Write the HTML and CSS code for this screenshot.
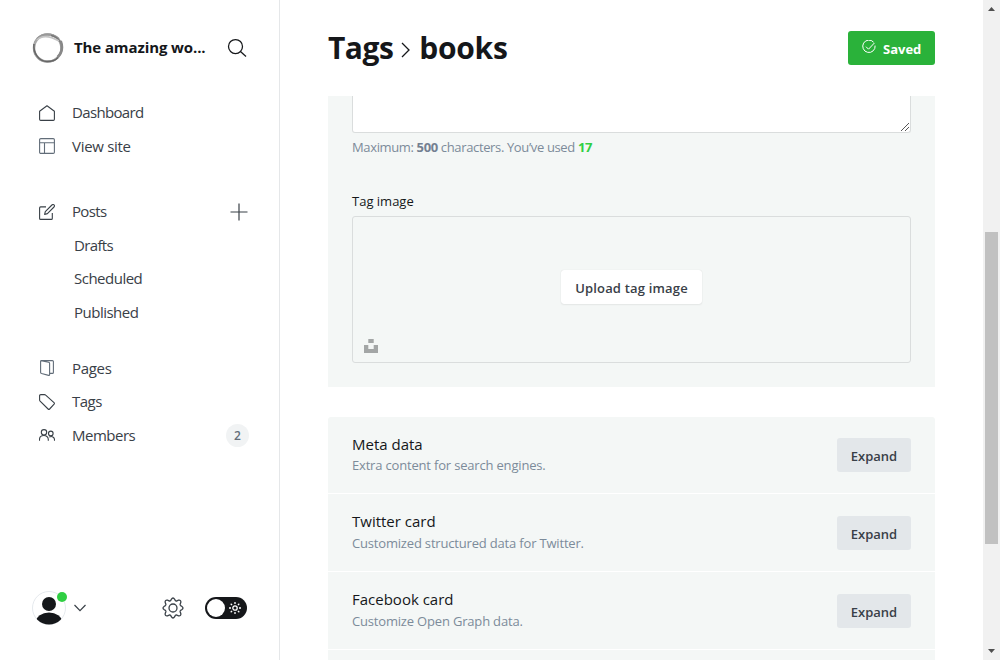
FILE: index.html
```html
<!DOCTYPE html>
<html lang="en">
<head>
<meta charset="utf-8">
<title>Tags</title>
<link rel="stylesheet" href="styles.css">
</head>
<body>
<div class="app">
  <aside class="sidebar">
    <header class="site">
      <svg class="site-logo" width="32" height="32" viewBox="0 0 32 32" fill="none">
        <circle cx="15.500" cy="16" r="13.700" stroke="#999" stroke-width="2"/>
        <ellipse cx="16" cy="16" rx="13.800" ry="13.400" stroke="#aaa" stroke-width="2.200"/>
        <path d="M5 7C10 1.500 20 .8 27 7" stroke="#999" stroke-width="2"/>
        <path d="M2 12C.8 21 7 29.500 15 29.500c5 0 9-1.500 11-4" stroke="#666" stroke-width="1.500"/>
        <path d="M28.700 9c2.300 6 1 12-3 16" stroke="#888" stroke-width="2.600"/>
        <path d="M19 3.500c4 .8 7 3 9 6" stroke="#777" stroke-width="1.500"/>
        <path d="M5 8C10 3 18 4 27 9" stroke="#c4c4c4" stroke-width="1.500"/>
      </svg>
      <span class="site-name">The amazing wo...</span>
      <svg class="search" width="20" height="20" viewBox="0 0 20 20" fill="none" stroke="#15171a" stroke-width="1.250"><circle cx="8.500" cy="8.500" r="7"/><path d="M13.500 13.500l5.500 5"/></svg>
    </header>

    <nav class="nav">
      <div class="group">
        <a class="item"><svg class="icon" viewBox="0 0 16 16"><path d="M.6 6.200v8.100c0 .7.4 1.100 1.100 1.100h12.600c.7 0 1.100-.4 1.100-1.100V6.200L8 .7z"/></svg><span class="tight">Dashboard</span></a>
        <a class="item"><svg class="icon muted" viewBox="0 0 16 16"><rect x=".6" y=".6" width="14.800" height="14.800" rx="1.200"/><path d="M.6 4.800h14.800M5.500 4.800v10.600"/></svg><span class="loose">View site</span></a>
      </div>
      <div class="group posts">
        <a class="item"><svg class="icon" viewBox="0 0 16 16"><path d="M7 2.900H1.600c-.6 0-1 .4-1 1v10.500c0 .6.400 1 1 1h10.700c.6 0 1-.4 1-1V9"/><path d="M5.600 10.400l.7-2.800L12.900 1c1.500-1.300 3.400.5 2.100 2L8.400 9.600z"/></svg><span class="tight">Posts</span><svg class="plus" width="18" height="18" viewBox="0 0 18 18"><path d="M9 .5v17M.5 9h17"/></svg></a>
        <a class="item sub"><span class="tight">Drafts</span></a>
        <a class="item sub"><span>Scheduled</span></a>
        <a class="item sub"><span>Published</span></a>
      </div>
      <div class="group">
        <a class="item"><svg class="icon muted" viewBox="0 0 16 16"><path d="M2 .7l7.600 1.500c.7.200 1 .5 1 1.100v11.200c0 .7-.4 1-1 .900l-7-1.900c-.6-.2-1-.5-1-1.100V1.300c0-.5.3-.7.800-.7h11c.6 0 1 .4 1 1v10.800c0 .6-.4 1-1 1h-2.600"/></svg><span class="loose">Pages</span></a>
        <a class="item"><svg class="icon" viewBox="0 0 16 16"><path d="M.6 1.800C.6 1 1 .6 1.800.6h3.700c.5 0 .8.100 1.200.5l8.300 7.600c.5.500.5 1 .1 1.500l-4.500 4.800c-.5.500-1 .5-1.500 0L1.100 7.200c-.4-.4-.5-.7-.5-1.200z"/></svg><span>Tags</span></a>
        <a class="item"><svg class="icon" viewBox="0 0 16 16"><circle cx="5" cy="5.300" r="2.700"/><path d="M.5 13.700v-1.200c0-5.300 8.800-5.300 8.800 0v1.200"/><circle cx="11.800" cy="6.400" r="2.300"/><path d="M10.300 9.900c2.700-1.200 5.200.3 5.200 2.700v1.100"/></svg><span>Members</span><b class="count">2</b></a>
      </div>
    </nav>

    <footer class="foot">
      <div class="avatar">
        <svg width="34" height="34" viewBox="0 0 34 34"><defs><clipPath id="round"><circle cx="17" cy="17" r="16.500"/></clipPath></defs><circle cx="17" cy="17" r="16.500" fill="#fff" stroke="#e5e9ed"/><g clip-path="url(#round)" fill="#15171a"><circle cx="17" cy="13" r="7"/><ellipse cx="17" cy="31" rx="13" ry="9.500"/></g></svg>
        <i class="online"></i>
      </div>
      <svg class="chevron" width="12" height="8" viewBox="0 0 12 8"><path d="M.5 1L6 6.700 11.500 1"/></svg>
      <svg class="gear" width="22" height="22" viewBox="0 0 22 22"><circle cx="11" cy="11" r="4"/><path d="M9.300 2.300Q11-.3 12.700 2.300L13.300 3.600Q14 4.300 15 3.800L16.400 3.200Q19.300 2.800 18.800 5.600L18.200 7Q17.800 8 18.600 8.600L19.700 9.200Q22.300 11 19.700 12.800L18.600 13.400Q17.800 14 18.200 15L18.800 16.400Q19.300 19.200 16.400 18.800L15 18.200Q14 17.700 13.300 18.400L12.700 19.700Q11 22.300 9.300 19.700L8.700 18.400Q8 17.700 7 18.200L5.600 18.800Q2.700 19.200 3.200 16.400L3.800 15Q4.200 14 3.400 13.400L2.300 12.800Q-.3 11 2.300 9.200L3.400 8.600Q4.200 8 3.800 7L3.200 5.600Q2.700 2.800 5.600 3.200L7 3.800Q8 4.300 8.700 3.600Z"/></svg>
      <div class="toggle"><i class="knob"></i><svg width="12" height="12" viewBox="0 0 12 12" fill="none" stroke="#fff" stroke-width="1.300"><circle cx="6" cy="6" r="2.200"/><path d="M6 0v2M6 10v2M0 6h2M10 6h2M1.700 1.700l1.400 1.400M8.900 8.900l1.400 1.400M1.700 10.300l1.400-1.400M8.900 3.100l1.400-1.400"/></svg></div>
    </footer>
  </aside>

  <main class="main">
    <header class="head">
      <h1 class="title"><span class="parent">Tags</span><svg width="9" height="16" viewBox="0 0 9 16"><path d="M1 1l7 7-7 7"/></svg><span class="current">books</span></h1>
      <button class="saved"><svg width="14" height="14" viewBox="0 0 14 14"><path d="M11.600 2.200A6.200 6.200 0 1 0 13.100 5.600"/><path d="M4 6.700l2.500 2.500 6-6.300"/></svg><span>Saved</span></button>
    </header>
    <section class="panel">
      <div class="textarea"><svg width="8" height="8" viewBox="0 0 8 8"><path d="M0 8L8 0M4 8l4-4"/></svg></div>
      <p class="hint">Maximum: <b>500</b> characters. You’ve used <b class="used">17</b></p>
      <div class="label">Tag image</div>
      <div class="upload">
        <button class="upload-btn">Upload tag image</button>
        <svg class="unsplash" width="14" height="14" viewBox="0 0 14 14"><path d="M4.300 0h5.400v4H4.300zM0 6h4.300v4h5.400V6H14v8H0z"/></svg>
      </div>
    </section>
    <section class="cards">
      <div class="card"><div><h4>Meta data</h4><p>Extra content for search engines.</p></div><button class="expand">Expand</button></div>
      <div class="card"><div><h4>Twitter card</h4><p>Customized structured data for Twitter.</p></div><button class="expand">Expand</button></div>
      <div class="card"><div><h4>Facebook card</h4><p>Customize Open Graph data.</p></div><button class="expand">Expand</button></div>
      <div class="card"></div>
    </section>
  </main>

  <div class="scrollbar">
    <svg width="7" height="4" viewBox="0 0 7 4"><path d="M0 4L3.500 0 7 4z"/></svg>
    <i class="thumb"></i>
    <svg width="7" height="4" viewBox="0 0 7 4"><path d="M0 0L3.500 4 7 0z"/></svg>
  </div>
</div>
</body>
</html>
```
FILE: styles.css
```css
* { box-sizing: border-box; }
body { margin: 0; font-family: "Open Sans", "Noto Sans", sans-serif; color: #15171a; background: #fff; }
h1, h4, p { margin: 0; }
button { border: 0; font: inherit; padding: 0; }
svg { flex: none; display: block; }
.app { display: flex; width: 1000px; height: 660px; overflow: hidden; }

.sidebar { width: 280px; flex: none; border-right: 1px solid #e5e7e9; display: flex; flex-direction: column; }
.site { display: flex; align-items: center; height: 96px; padding-left: 32px; }
.site-name { width: 144px; margin-left: 10px; padding-bottom: 2px; font-size: 15px; font-weight: 700; white-space: nowrap; letter-spacing: -.1px; }
.search { margin-left: 9px; }
.nav { display: flex; flex-direction: column; gap: 22.300px; }
.group { display: flex; flex-direction: column; }
.posts { margin-top: 9.700px; }
.item { display: flex; align-items: center; height: 33.500px; padding: 0 31px 0 39px; font-size: 15px; line-height: 20px; color: #394047; white-space: nowrap; letter-spacing: -.5px; }
.item span { padding-bottom: 1px; }
.item .tight { letter-spacing: -.65px; }
.item .loose { letter-spacing: -.3px; }
.item.sub { padding-left: 74px; }
.icon { width: 16px; height: 16px; margin-right: 17px; fill: none; stroke: #394047; stroke-width: 1.100; stroke-linejoin: round; }
.icon.muted { stroke: #626d79; }
.plus { margin-left: auto; stroke: #394047; stroke-width: 1.200; }
.count { margin: 0 -1px 0 auto; width: 23px; height: 23px; border-radius: 12px; background: #f1f3f4; color: #626d79; font-size: 12px; font-weight: 600; line-height: 24px; text-align: center; letter-spacing: 0; }
.foot { margin-top: auto; display: flex; align-items: center; height: 104px; padding: 0 32px; }
.avatar { position: relative; width: 34px; height: 34px; }
.online { position: absolute; top: 1px; right: -1px; width: 10px; height: 10px; border-radius: 50%; background: #30cf43; }
.chevron { margin-left: 8px; fill: none; stroke: #394047; stroke-width: 1.200; }
.gear { margin-left: 76px; fill: none; stroke: #394047; stroke-width: 1.300; }
.toggle { margin-left: 21px; width: 42px; height: 22px; border-radius: 11px; background: #15171a; display: flex; flex: none; align-items: center; padding: 0 6px 0 2px; justify-content: space-between; }
.knob { width: 18px; height: 18px; border-radius: 50%; background: #fff; }

.main { width: 607px; margin-left: 48px; flex: none; }
.head { height: 96px; display: flex; align-items: center; justify-content: space-between; }
.title { display: flex; align-items: center; font-size: 30px; line-height: 40px; font-weight: 700; padding-bottom: 1px; }
.parent { letter-spacing: -.5px; }
.current { letter-spacing: -.3px; }
.title svg { margin: 4px 9px 0 8px; fill: none; stroke: #15171a; stroke-width: 1.300; }
.saved { width: 87px; height: 34px; border-radius: 3px; background: #2ab23a; color: #fff; display: flex; align-items: center; padding-left: 14px; font-size: 13px; font-weight: 700; }
.saved span { padding-top: 1px; }
.saved svg { margin-right: 7px; margin-bottom: 2px; fill: none; stroke: #fff; stroke-width: 1; }
.panel { height: 291px; padding: 0 24px; background: #f4f7f6; }
.textarea { height: 37px; border: 1px solid #dadddd; border-top: 0; border-radius: 0 0 3px 3px; background: #fff; display: flex; align-items: flex-end; justify-content: flex-end; padding: 0 1px 1px 0; }
.textarea svg { stroke: #444; stroke-width: .9; }
.hint { margin-top: 4px; font-size: 13px; line-height: 20px; color: #7c8b9a; white-space: nowrap; letter-spacing: -.36px; }
.hint b { color: #738091; }
.hint .used { color: #30cf43; }
.label { margin-top: 34px; font-size: 13px; line-height: 20px; font-weight: 500; }
.upload { margin-top: 5px; height: 147px; border: 1px solid #dadddd; border-radius: 3px; display: grid; place-items: center; }
.upload > * { grid-area: 1 / 1; }
.upload-btn { width: 141px; height: 34px; margin-top: -6px; border-radius: 3px; background: #fff; box-shadow: 0 0 1px rgba(0,0,0,.15), 0 1px 2px rgba(0,0,0,.06); color: #394047; font-size: 13px; font-weight: 600; padding-top: 2px; letter-spacing: .18px; }
.unsplash { place-self: end start; margin: 0 0 9px 11px; fill: #a3a6a6; }
.cards { margin-top: 30px; display: flex; flex-direction: column; gap: 1px; }
.card { height: 77px; flex: none; background: #f4f7f6; padding: 0 24px; display: flex; justify-content: space-between; align-items: flex-start; }
.card:first-child { height: 76px; border-radius: 3px 3px 0 0; }
.card h4 { margin-top: 17px; font-size: 15px; line-height: 20px; font-weight: 500; white-space: nowrap; }
.card p { font-size: 13px; line-height: 20px; margin-top: 2px; color: #7c8b9a; white-space: nowrap; letter-spacing: -.18px; }
.card:first-child p { margin-top: 1px; }
.expand { width: 74px; height: 34px; margin-top: 22px; border-radius: 3px; background: #e3e7ea; color: #394047; font-size: 13px; font-weight: 600; padding-top: 2px; }
.card:first-child .expand { margin-top: 21px; }

.scrollbar { margin-left: auto; width: 17px; background: #f1f1f1; display: flex; flex-direction: column; align-items: center; padding: 7px 0; }
.scrollbar svg { fill: #505050; }
.scrollbar svg:last-child { margin-top: auto; }
.thumb { width: 13px; height: 312px; margin-top: 221px; background: #c1c1c1; }
```
